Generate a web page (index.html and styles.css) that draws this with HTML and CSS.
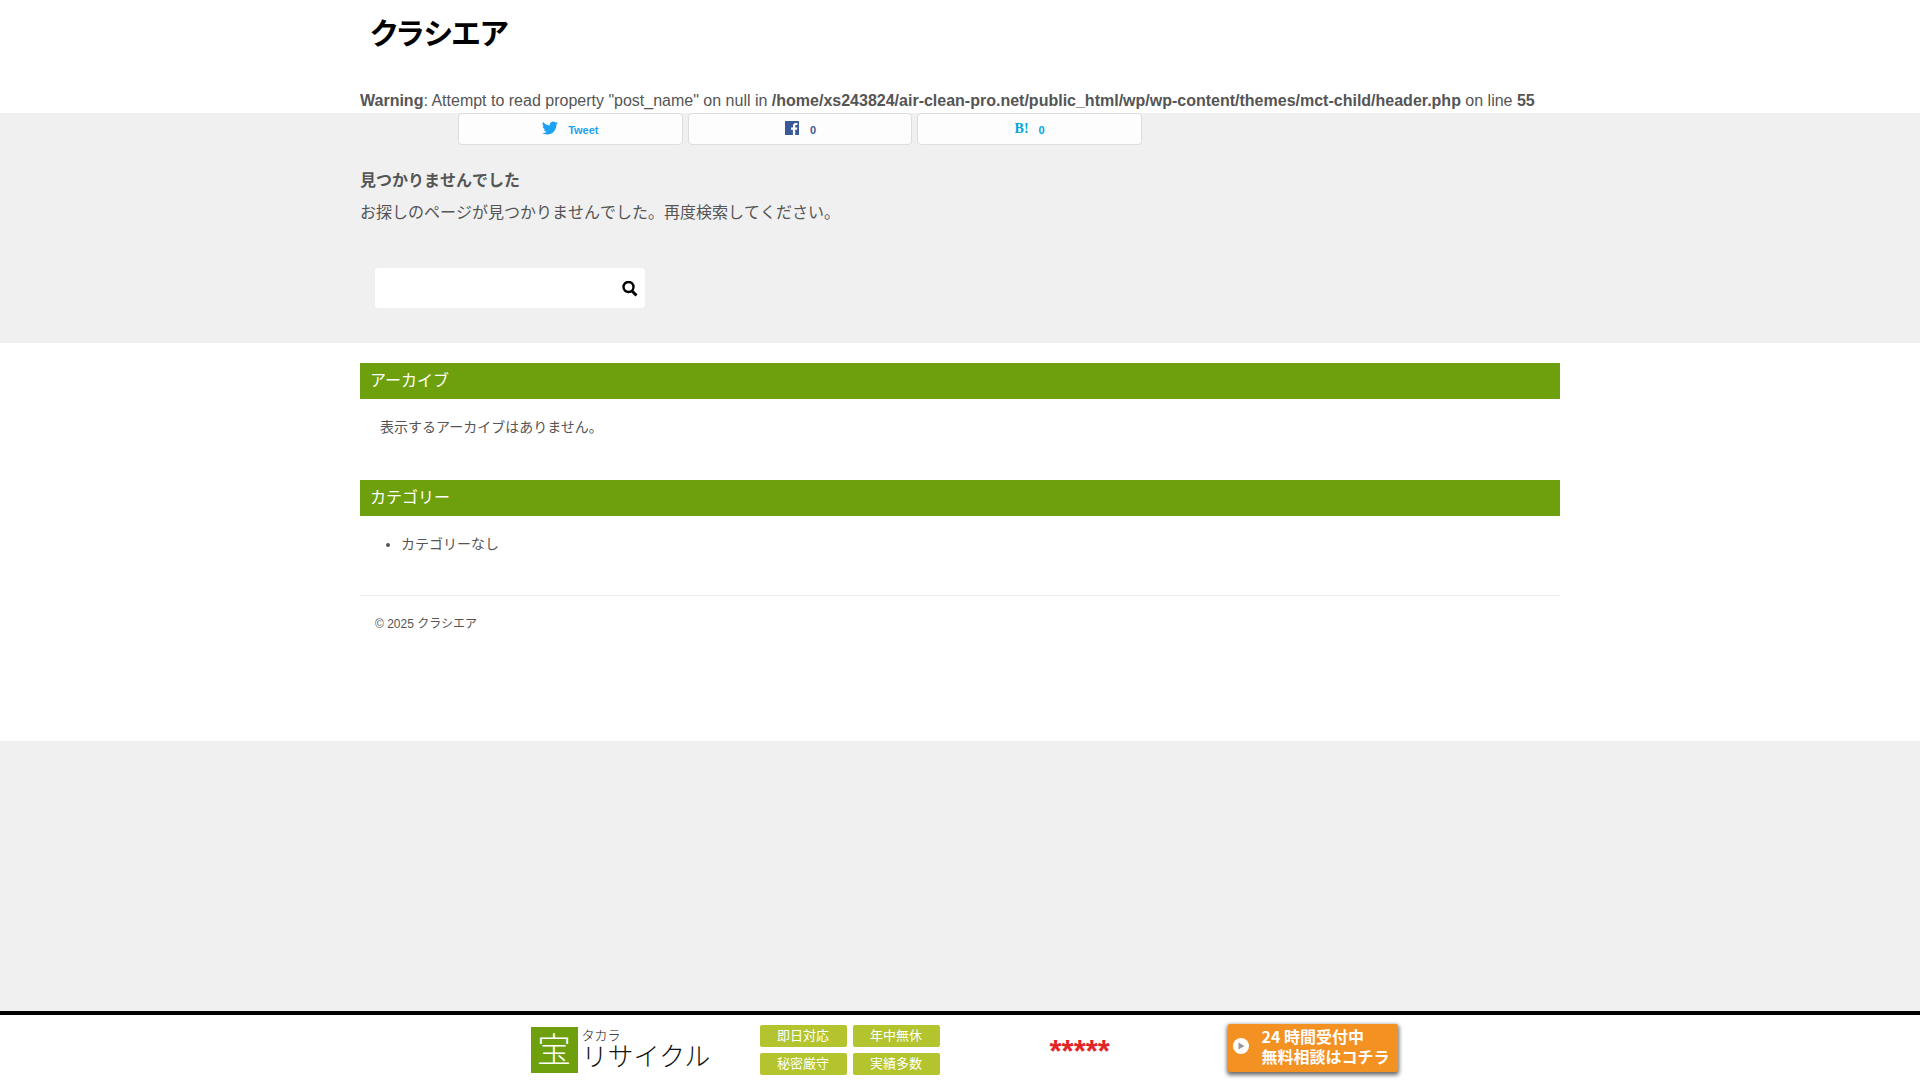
FILE: index.html
```
<!DOCTYPE html>
<html lang="ja">
<head>
    <meta charset="UTF-8">
    <meta name="viewport" content="width=device-width, initial-scale=1.0">
    <title>クラシエア</title>
    <link rel="stylesheet" href="styles.css">
</head>
<body>

    <header class="header">
        <div class="inner">
            <h1 class="site-title"><a href="#">クラシエア</a></h1>
            <p class="warning"><b>Warning</b>: Attempt to read property "post_name" on null in <b>/home/xs243824/air-clean-pro.net/public_html/wp/wp-content/themes/mct-child/header.php</b> on line <b>55</b></p>
        </div>
    </header>

    <main class="main">
        <div class="inner">
            <div class="share">
                <a class="share-btn twitter" href="#">
                    <svg class="share-icon" viewBox="0 0 24 24" aria-hidden="true"><path fill="currentColor" d="M23.95 4.57a10 10 0 0 1-2.82.77 4.96 4.96 0 0 0 2.16-2.72 9.9 9.9 0 0 1-3.12 1.19 4.92 4.92 0 0 0-8.38 4.48C7.69 8.09 4.07 6.13 1.64 3.16a4.92 4.92 0 0 0 1.52 6.57 4.9 4.9 0 0 1-2.23-.61v.06c0 2.38 1.7 4.37 3.95 4.82a5 5 0 0 1-2.21.09 4.94 4.94 0 0 0 4.6 3.42A9.87 9.87 0 0 1 0 19.54a13.94 13.94 0 0 0 7.55 2.21c9.05 0 14-7.5 14-13.98 0-.21 0-.42-.02-.63a9.94 9.94 0 0 0 2.42-2.57z"/></svg>
                    <span>Tweet</span>
                </a>
                <a class="share-btn facebook" href="#">
                    <svg class="share-icon" viewBox="0 0 16 16" aria-hidden="true"><path fill="currentColor" d="M1.500 1h13a.5.5 0 0 1 .5.5v13a.5.5 0 0 1-.5.5h-3.300V9.700h1.800l.3-2.200h-2.100V6.200c0-.7.300-1.100 1.100-1.100h1.100V3.100a12 12 0 0 0-1.600-.1c-1.700 0-2.800 1-2.800 2.800v1.700H7v2.200h1.900V15H1.500a.5.5 0 0 1-.5-.5v-13a.5.5 0 0 1 .5-.5z"/></svg>
                    <span>0</span>
                </a>
                <a class="share-btn hatena" href="#">
                    <b class="hatena-icon">B!</b>
                    <span>0</span>
                </a>
            </div>

            <h2 class="notfound-title">見つかりませんでした</h2>
            <p class="notfound-text">お探しのページが見つかりませんでした。再度検索してください。</p>

            <form class="search">
                <input type="text" class="search-input" aria-label="検索">
                <button type="button" class="search-btn" aria-label="検索">
                    <svg viewBox="0 0 16 16" width="16" height="16" aria-hidden="true"><circle cx="6.500" cy="6" r="5" fill="none" stroke="#000" stroke-width="2.400"/><path d="M10 10l4.500 4.500" stroke="#000" stroke-width="3"/></svg>
                </button>
            </form>
        </div>
    </main>

    <footer class="footer">
        <div class="inner">
            <section class="widget">
                <h3 class="widget-title">アーカイブ</h3>
                <p class="widget-text">表示するアーカイブはありません。</p>
            </section>
            <section class="widget">
                <h3 class="widget-title">カテゴリー</h3>
                <ul class="widget-list">
                    <li>カテゴリーなし</li>
                </ul>
            </section>
            <p class="copyright">© 2025 クラシエア</p>
        </div>
    </footer>

    <div class="bottom-bar">
        <a class="brand" href="#">
            <span class="brand-mark">宝</span>
            <span class="brand-name"><small>タカラ</small>リサイクル</span>
        </a>
        <ul class="badges">
            <li>即日対応</li>
            <li>年中無休</li>
            <li>秘密厳守</li>
            <li>実績多数</li>
        </ul>
        <span class="tel">*****</span>
        <a class="contact" href="#">
            <svg width="16" height="16" viewBox="0 0 16 16" aria-hidden="true"><circle cx="8" cy="8" r="8" fill="#fff"/><path d="M5.500 4.500l6 3.500-6 3.500z" fill="#999"/></svg>
            <span class="contact-text">24 時間受付中<br>無料相談はコチラ</span>
        </a>
    </div>

</body>
</html>
```
FILE: styles.css
```
* {
    box-sizing: border-box;
}

body {
    margin: 0;
    background-color: #f0f0f0;
    color: #555;
    font-family: "Liberation Sans", "Noto Sans CJK JP", sans-serif;
    font-size: 16px;
    line-height: 26px;
}

h1, h2, h3, p, ul {
    margin: 0;
    padding: 0;
}

a {
    text-decoration: none;
}

.inner {
    max-width: 1200px;
    margin: 0 auto;
}

.header {
    background-color: #fff;
}

.site-title {
    padding: 14px 10px 34px;
    font-size: 30px;
    font-feature-settings: "palt";
    line-height: 40px;
}

.site-title a {
    color: #000;
}

.warning {
    line-height: 25px;
}

.main {
    padding-bottom: 35px;
}

.share {
    display: grid;
    grid-template-columns: repeat(3, 1fr);
    gap: 5px;
    width: 57%;
    margin-left: 98px;
}

.share-btn {
    display: flex;
    align-items: center;
    justify-content: center;
    gap: 10px;
    height: 32px;
    border: 1px solid #ddd;
    border-radius: 4px;
    background-color: #fdfdfd;
    font-size: 11px;
    font-weight: bold;
}

.share-btn span {
    padding-top: 2px;
}

.share-icon {
    width: 16px;
    height: 16px;
    margin-bottom: 2px;
}

.twitter {
    color: #1da1f2;
}

.facebook {
    color: #3b5998;
}

.hatena {
    color: #00a5de;
}

.hatena-icon {
    font-family: "Liberation Serif", serif;
    font-size: 14px;
}

.notfound-title {
    margin-top: 20px;
    font-size: 16px;
}

.notfound-title,
.notfound-text {
    font-kerning: none;
    line-height: 32px;
}

.search {
    display: flex;
    width: 270px;
    height: 40px;
    margin: 39px 15px 0;
    border-radius: 3px;
    background-color: #fff;
}

.search-input {
    flex: 1;
    min-width: 0;
    padding: 0 10px;
    border: none;
    background: none;
    font-size: 16px;
}

.search-btn {
    width: 30px;
    padding: 4px 0 0;
    border: none;
    background: none;
    cursor: pointer;
}

.footer {
    padding: 20px 0 89px;
    background-color: #fff;
}

.widget {
    font-size: 14px;
}

.widget-title {
    height: 36px;
    padding: 0 10px;
    background-color: #6da00c;
    color: #fff;
    font-size: 16px;
    font-weight: normal;
    line-height: 36px;
}

.widget-text {
    padding: 15px 20px 40px;
}

.widget-list {
    padding: 15px 20px 38px 41px;
}

.copyright {
    padding: 15px;
    border-top: 1px solid #eee;
    font-size: 12px;
}

.bottom-bar {
    position: fixed;
    right: 0;
    bottom: 0;
    left: 0;
    display: flex;
    align-items: center;
    justify-content: center;
    height: 69px;
    padding: 4px 0 0 8px;
    border-top: 4px solid #000;
    background-color: #fff;
}

.brand {
    display: flex;
    align-items: center;
    gap: 4px;
    width: 229px;
    color: #111;
}

.brand-mark {
    width: 47px;
    background-color: #6da00c;
    color: #fff;
    font-size: 34px;
    font-weight: 300;
    line-height: 46px;
    text-align: center;
}

.brand-name {
    font-size: 26px;
    font-weight: 300;
    line-height: 28px;
}

.brand-name small {
    display: block;
    font-size: 13px;
    line-height: 14px;
}

.badges {
    display: grid;
    grid-template-columns: 87px 87px;
    gap: 6px;
    list-style: none;
}

.badges li {
    border-radius: 2px;
    background-color: #b3c42e;
    color: #fff;
    font-size: 13px;
    line-height: 22px;
    text-align: center;
}

.tel {
    width: 288px;
    padding: 4px 0 0 110px;
    color: #e42528;
    font-size: 31px;
    font-weight: bold;
}

.contact {
    display: flex;
    align-items: center;
    gap: 13px;
    width: 170px;
    height: 48px;
    margin-bottom: 4px;
    padding-left: 5px;
    border-radius: 2px;
    background-color: #f39122;
    box-shadow: 0 2px 4px 1px rgba(0, 0, 0, 0.6);
    color: #fff;
    font-family: "Noto Sans CJK JP", sans-serif;
    font-size: 16px;
    font-weight: bold;
    line-height: 20px;
}

.contact svg {
    margin-bottom: 3px;
}

.contact-text {
    padding-bottom: 4px;
}
```
